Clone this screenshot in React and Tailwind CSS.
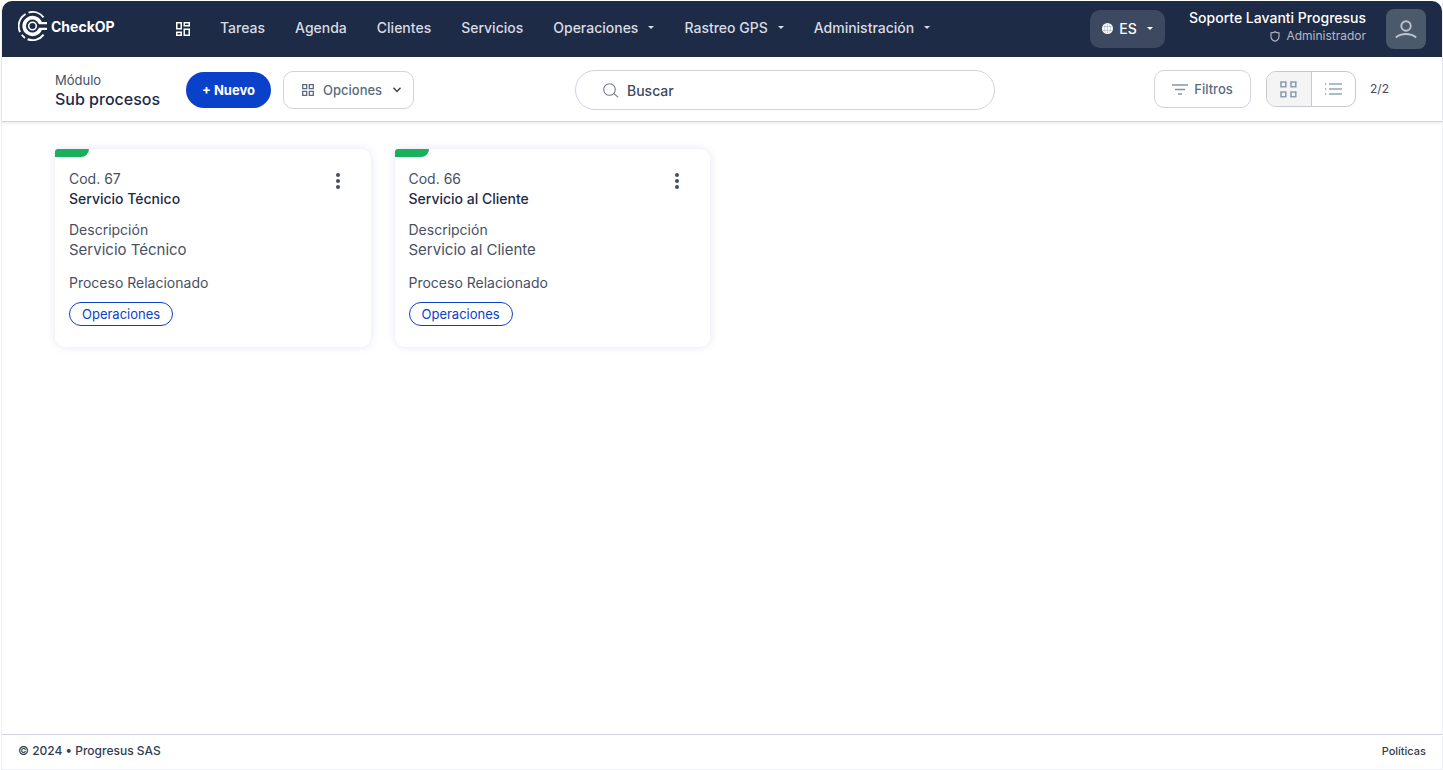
import React from "react";

const navItems = [
  { label: "Tareas" },
  { label: "Agenda" },
  { label: "Clientes" },
  { label: "Servicios" },
  { label: "Operaciones", menu: true },
  { label: "Rastreo GPS", menu: true },
  { label: "Administración", menu: true },
];

const cards = [
  { code: 67, name: "Servicio Técnico", process: "Operaciones" },
  { code: 66, name: "Servicio al Cliente", process: "Operaciones" },
];

function Logo() {
  return (
    <svg width="30" height="30" viewBox="0 0 30 30" fill="none" stroke="#fff" aria-hidden="true">
      <circle cx="14.5" cy="15" r="3.8" strokeWidth="1.6" />
      <path d="M22.3 12.2A8.3 8.3 0 1 0 22.3 17.8" strokeWidth="3.6" />
      <path d="M21 12.1H29M21 17.900H29" strokeWidth="2.4" />
      <path d="M10.5 1.6A14 14 0 0 1 25.5 6.3" strokeWidth="2" />
      <path d="M7.6 3A14 14 0 0 0 2.1 21.2" strokeWidth="1.8" />
      <path d="M3.8 23.8A14 14 0 0 0 7 26.9" strokeWidth="1.8" />
      <path d="M9.6 28.3A14 14 0 0 0 25.6 23.6" strokeWidth="2" />
    </svg>
  );
}

function DashboardIcon() {
  return (
    <svg width="14" height="14" viewBox="0 0 14 14" fill="none" stroke="#fff" strokeWidth="1.5" aria-hidden="true">
      <path d="M.75.75h4.5v6H.75zM8.25.75h5v3h-5zM.75 10.25h4.5v3H.75zM8.25 7.25h5v6h-5z" />
    </svg>
  );
}

function Caret() {
  return (
    <svg width="6" height="3" viewBox="0 0 6 3" fill="currentColor" aria-hidden="true">
      <path d="M0 0h6L3 3z" />
    </svg>
  );
}

function GridIcon() {
  return (
    <svg width="12" height="12" viewBox="0 0 12 12" fill="none" stroke="#5a6b80" strokeWidth="1.3" aria-hidden="true">
      <path d="M.7.7h4v4h-4zM7.3.7h4v4h-4zM.7 7.3h4v4h-4zM7.3 7.3h4v4h-4z" />
    </svg>
  );
}

function TilesIcon() {
  return (
    <svg width="17" height="17" viewBox="0 0 17 17" fill="none" stroke="#8b9db3" strokeWidth="1.6" aria-hidden="true">
      <path d="M1 1h4.8v4.8H1zM11 1h4.8v4.8h-4.8zM1 11h4.8v4.8H1zM11 11h4.8v4.8h-4.8z" />
    </svg>
  );
}

function ListIcon() {
  return (
    <svg width="17" height="12" viewBox="0 0 17 12" fill="none" stroke="#94a3b8" strokeWidth="1.3" aria-hidden="true">
      <path d="M4 1h13M4 6h13M4 11h13M0 1h1.3M0 6h1.3M0 11h1.3" />
    </svg>
  );
}

function FilterIcon() {
  return (
    <svg width="16" height="11" viewBox="0 0 16 11" fill="none" stroke="#8595a8" strokeWidth="1.4" aria-hidden="true">
      <path d="M0 1h16M3 5.5h10M6 10h4" />
    </svg>
  );
}

function SearchIcon() {
  return (
    <svg width="16" height="15" viewBox="0 0 16 15" fill="none" stroke="#777d86" strokeWidth="1.1" aria-hidden="true">
      <circle cx="6.5" cy="6.5" r="5.8" />
      <path d="M10.7 10.4l4.6 4" />
    </svg>
  );
}

function GlobeIcon() {
  return (
    <svg width="11" height="11" viewBox="0 0 10 10" aria-hidden="true">
      <circle cx="5" cy="5" r="5" fill="#fff" />
      <path d="M1 3.2h8M1 6.8h8M5 .8v8.400M3 1.200C2.200 3.500 2.200 6.500 3 8.800M7 1.200c.8 2.300.8 5.300 0 7.600" stroke="#8f9bb3" strokeWidth=".45" fill="none" />
    </svg>
  );
}

function ShieldIcon() {
  return (
    <svg width="10" height="11" viewBox="0 0 10 11" fill="none" stroke="#b4bac6" strokeWidth="1.1" aria-hidden="true">
      <path d="M5 .7C3.8 1.5 2.4 1.8 1 1.8V5.4C1 7.7 2.7 9.4 5 10.3 7.3 9.4 9 7.7 9 5.4V1.8C7.6 1.8 6.2 1.5 5 .7z" />
    </svg>
  );
}

function UserIcon() {
  return (
    <svg width="22" height="19" viewBox="0 0 22 19" fill="none" stroke="#bcc3cc" strokeWidth="1.9" aria-hidden="true">
      <circle cx="11" cy="6" r="4.7" />
      <path d="M.8 17.4C6.5 12.8 15.5 12.8 21.2 17.4" />
    </svg>
  );
}

function Card({ code, name, process }) {
  return (
    <article className="overflow-hidden rounded-[10px] rounded-tl-[3px] bg-white pb-[21px] shadow-[0_0_8px_rgba(60,90,180,0.15)]">
      <div className="h-2 w-[34px] rounded-br-lg bg-[#1aaf5d]" />
      <div className="flex items-start justify-between pt-3 pr-[26px] pl-[14px]">
        <div className="text-[14px] leading-5 text-[#475163]">
          <p>Cod. {code}</p>
          <h2 className="font-medium text-[#1e2b47]">{name}</h2>
          <p className="mt-[11px]">Descripción</p>
          <p className="text-[15px]">{name}</p>
          <p className="mt-[13px]">Proceso Relacionado</p>
          <span className="mt-[9px] inline-block rounded-full border border-[#0a41cb] px-3 text-[13px] leading-[22px] text-[#0a41cb]">
            {process}
          </span>
        </div>
        <button type="button" aria-label="Más opciones" className="flex w-[14px] justify-center pt-1">
          <svg width="6" height="16" viewBox="0 0 6 16" fill="#444e60" aria-hidden="true">
            <circle cx="3" cy="2" r="2" />
            <circle cx="3" cy="8" r="2" />
            <circle cx="3" cy="14" r="2" />
          </svg>
        </button>
      </div>
    </article>
  );
}

export default function App() {
  return (
    <div className="min-h-screen bg-white pt-px pl-px font-['Inter',sans-serif]">
      <div className="flex min-h-[calc(100vh-1px)] flex-col border-x border-b border-[#eef0f4]">
        <header className="flex h-14 items-center rounded-t-[10px] bg-[#1e2b47] px-4">
          <a href="#inicio" className="flex w-[100px] items-center gap-[3px] pb-[6px] text-[14px] font-bold text-white">
            <Logo />
            CheckOP
          </a>
          <nav className="ml-[58px] flex flex-1 items-center gap-[30px] pb-1 text-[14px] font-medium text-[#d8dbe2]">
            <a href="#panel" aria-label="Panel" className="pt-1">
              <DashboardIcon />
            </a>
            {navItems.map((item) =>
              item.menu ? (
                <button key={item.label} type="button" className="flex items-center gap-[10px] whitespace-nowrap">
                  {item.label}
                  <Caret />
                </button>
              ) : (
                <a key={item.label} href={"#" + item.label.toLowerCase()}>
                  {item.label}
                </a>
              )
            )}
          </nav>
          <button type="button" aria-label="Idioma: ES" className="flex h-[38px] w-[75px] items-center justify-center rounded-[10px] bg-[#3c4960] pb-[2px] text-[14px] font-medium text-white">
            <GlobeIcon />
            <span className="mr-[10px] ml-[6px]">ES</span>
            <Caret />
          </button>
          <div className="ml-6 pb-1 text-right">
            <p className="text-[14px] leading-[18px] font-medium text-white">Soporte Lavanti Progresus</p>
            <p className="flex items-center justify-end gap-[6px] text-[12px] leading-[18px] text-[#b4bac6]">
              <ShieldIcon />
              Administrador
            </p>
          </div>
          <button type="button" aria-label="Perfil" className="ml-5 flex size-10 items-center justify-center rounded-lg bg-[#4a5a6b]">
            <UserIcon />
          </button>
        </header>

        <div className="flex h-[65px] items-center border-b border-[#ced3e0] px-[53px] pt-[2px] shadow-[0_1px_3px_rgba(60,80,120,0.15)]">
          <div className="flex w-[520px] shrink-0 items-center">
            <div className="w-[131px] text-[#1e2b47]">
              <p className="text-[13px] leading-[18px] text-[#475163]">Módulo</p>
              <h1 className="text-[16px] leading-5 font-medium">Sub procesos</h1>
            </div>
            <button type="button" className="h-9 w-[85px] rounded-full bg-[#0a41cb] pt-px text-[13px] font-bold text-white">
              + Nuevo
            </button>
            <button type="button" className="ml-3 flex h-[38px] w-[131px] items-center rounded-[10px] border border-[#d0d2e0] pl-[18px] text-[13px] font-medium text-[#5a6b80]">
              <GridIcon />
              <span className="ml-[9px] flex-1 pt-px text-left">Opciones</span>
              <svg width="8" height="6" viewBox="0 0 8 6" fill="none" stroke="#333d4c" strokeWidth="1.4" className="mr-3" aria-hidden="true">
                <path d="M.5.8L4 4.4 7.5.8" />
              </svg>
            </button>
          </div>
          <label className="flex h-10 w-[420px] items-center gap-2 rounded-full border border-[#d0d2e0] pr-5 pl-[27px]">
            <SearchIcon />
            <input
              type="search"
              aria-label="Buscar"
              placeholder="Buscar"
              className="min-w-0 flex-1 text-[14px] font-medium text-[#3f4a60] outline-none placeholder:text-[#3f4a60]"
            />
          </label>
          <div className="flex flex-1 items-center justify-end pb-[2px]">
            <button type="button" className="flex h-[38px] w-[97px] items-center justify-center gap-[6px] rounded-[10px] border border-[#d0d2e0] text-[13px] font-medium text-[#5a6b80]">
              <FilterIcon />
              <span className="pt-px">Filtros</span>
            </button>
            <div className="ml-[15px] flex h-9 w-[90px] overflow-hidden rounded-[10px] border border-[#c8c9cc]">
              <button type="button" aria-label="Vista de tarjetas" className="flex flex-1 items-center justify-center border-r border-[#c8c9cc] bg-[#f4f4f4]">
                <TilesIcon />
              </button>
              <button type="button" aria-label="Vista de lista" className="flex flex-1 items-center justify-center">
                <ListIcon />
              </button>
            </div>
            <span className="ml-[14px] text-[12px] text-[#3f4a60]">2/2</span>
          </div>
        </div>

        <main className="grid flex-1 grid-cols-4 content-start gap-6 px-[53px] pt-[27px]">
          {cards.map((card) => (
            <Card key={card.code} {...card} />
          ))}
        </main>

        <footer className="flex h-[35px] items-center justify-between border-t border-[#d0d2e0] px-4 pb-[2px] text-[12px] font-medium text-[#333d50]">
          <p>© 2024 • Progresus SAS</p>
          <a href="#politicas" className="text-[11px]">Políticas</a>
        </footer>
      </div>
    </div>
  );
}
